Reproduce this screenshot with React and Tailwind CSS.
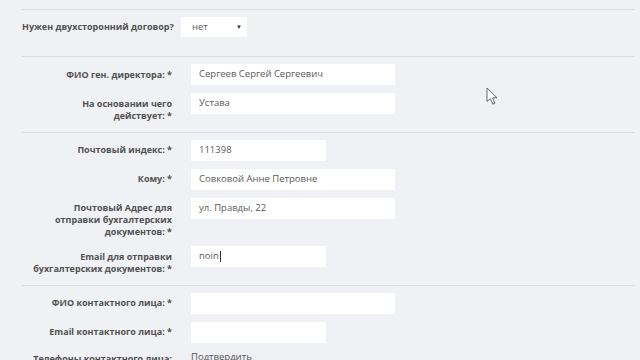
const font = { fontFamily: '"Open Sans", "Liberation Sans", sans-serif' };

function Field({ label, value, short, caret }) {
  return (
    <div className="flex items-start">
      <div className="w-[150px] shrink-0 pt-[4.5px] text-right text-[9px] font-bold leading-[12px] text-[#505050]">
        {label}
      </div>
      <div
        className={`ml-[19px] flex h-[21px] items-center bg-white pl-[8px] text-[9.5px] text-[#5a5a5a] ${
          short ? "w-[135px]" : "w-[204px]"
        }`}
      >
        {value}
        {caret && <span className="ml-px inline-block h-[11px] w-px bg-[#333]" />}
      </div>
    </div>
  );
}

function Section({ children, bottom = "pb-[10px]" }) {
  return (
    <div className={`flex flex-col gap-[8px] border-t border-[#dcdde1] pt-[7px] ${bottom}`}>
      {children}
    </div>
  );
}

export default function App() {
  return (
    <div className="relative h-[360px] w-[640px] overflow-hidden bg-[#f0f1f4]" style={font}>
      <div className="ml-[22px] mr-[5px] pt-[9px]">
        <Section bottom="pb-[19px]">
          <div className="flex items-center">
            <span className="w-[152px] text-[9px] font-bold text-[#505050]">Нужен двухсторонний договор?</span>
            <div className="ml-[7px] flex h-[20px] w-[66px] items-center justify-between bg-white pl-[11px] pr-[5px] text-[9.5px] text-[#5a5a5a]">
              <span>нет</span>
              <span className="text-[6px] text-[#333]">▼</span>
            </div>
          </div>
        </Section>

        <Section>
          <Field label="ФИО ген. директора: *" value="Сергеев Сергей Сергеевич" />
          <Field
            label={
              <>
                На основании чего
                <br />
                действует: *
              </>
            }
            value="Устава"
          />
        </Section>

        <Section>
          <Field label="Почтовый индекс: *" value="111398" short />
          <Field label="Кому: *" value="Совковой Анне Петровне" />
          <Field
            label={
              <>
                Почтовый Адрес для
                <br />
                отправки бухгалтерских
                <br />
                документов: *
              </>
            }
            value="ул. Правды, 22"
          />
          <Field
            label={
              <>
                Email для отправки
                <br />
                бухгалтерских документов: *
              </>
            }
            value="noin"
            short
            caret
          />
        </Section>

        <Section>
          <Field label="ФИО контактного лица: *" value="" />
          <Field label="Email контактного лица: *" value="" short />
          <div className="flex items-start">
            <div className="w-[150px] shrink-0 pt-[2px] text-right text-[9px] font-bold leading-[12px] text-[#505050]">
              Телефоны контактного лица:
            </div>
            <div className="ml-[19px] text-[9.5px] leading-[12px] text-[#555]">Подтвердить</div>
          </div>
        </Section>
      </div>

      <svg className="absolute left-[486px] top-[87px]" width="13" height="19" viewBox="0 0 13 19">
        <path
          d="M1 1 L1 14.5 L4.3 11.6 L6.8 17.2 L8.9 16.3 L6.5 10.8 L11 10.8 Z"
          fill="#fff"
          stroke="#666"
          strokeWidth="1"
          strokeLinejoin="round"
        />
      </svg>
    </div>
  );
}
